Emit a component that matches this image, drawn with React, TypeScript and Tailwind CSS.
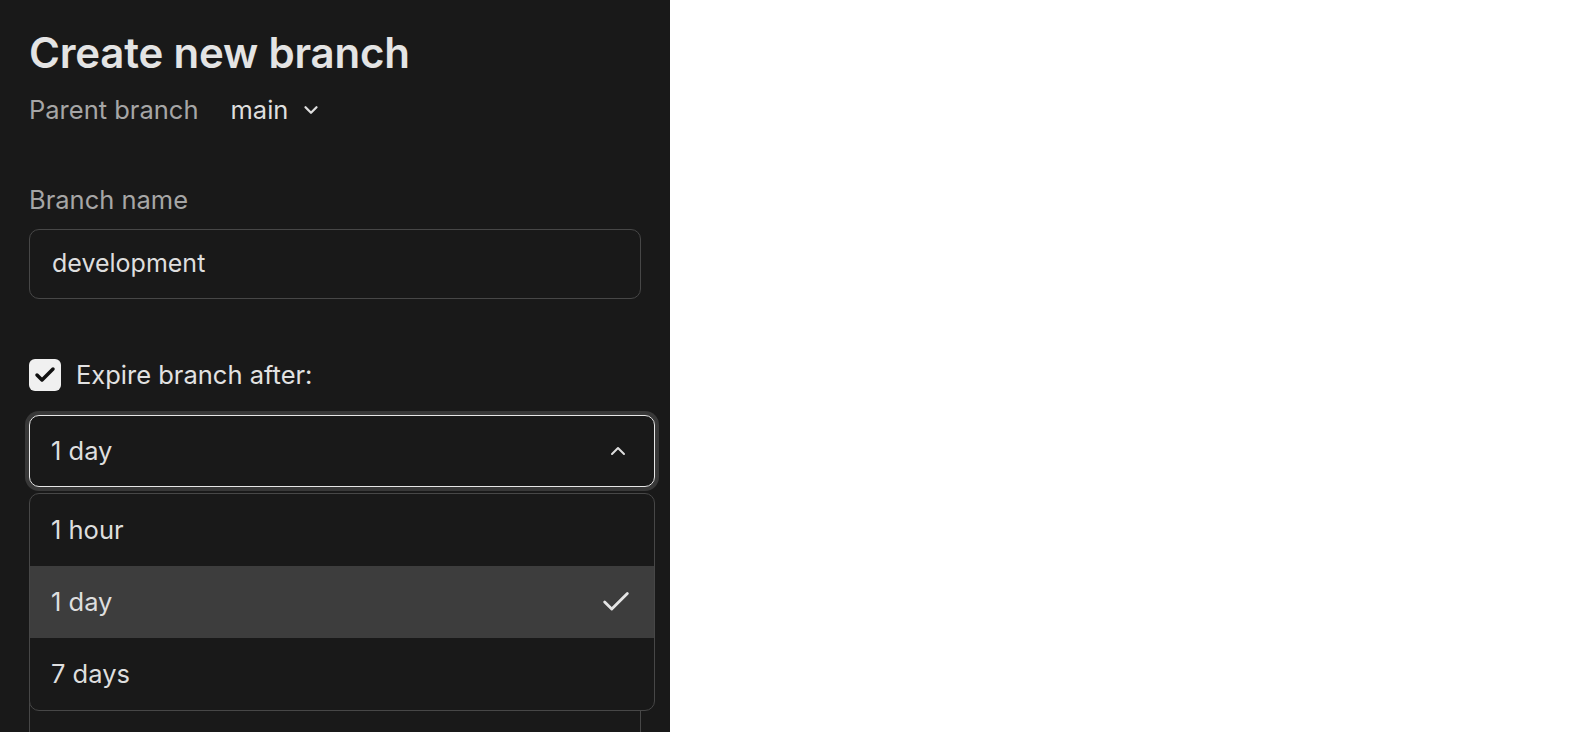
import { Check, ChevronDown, ChevronUp } from 'lucide-react';

const options = ['1 hour', '1 day', '7 days'];

const App: React.FC = () => {
  const selected = '1 day';
  return (
    <div className="flex h-[732px] w-full overflow-hidden font-['Inter',sans-serif]">
      <div className="w-[670px] shrink-0 h-full overflow-hidden bg-[#191919] pl-[29px] pr-[29px] pt-[28px]">
        <h1 className="text-[42px] leading-[50px] font-semibold text-[#e4e4e4] tracking-[-0.2px]">
          Create new branch
        </h1>
        <div className="mt-[16px] flex items-center text-[25.5px] leading-[32px]">
          <span className="text-[#a6a6a6]">Parent branch</span>
          <button className="ml-[32px] flex items-center text-[#dedede]">
            main
            <ChevronDown size={22} strokeWidth={2.5} className="ml-[12px]" />
          </button>
        </div>

        <label className="mt-[58px] block text-[25.5px] leading-[32px] text-[#a6a6a6]">
          Branch name
        </label>
        <div className="mt-[13px] flex h-[70px] items-center rounded-[10px] border border-[#474747] px-[22px] text-[25px] text-[#dedede]">
          development
        </div>

        <div className="mt-[60px] flex items-center gap-[15px]">
          <div className="flex h-[32px] w-[32px] items-center justify-center rounded-[6px] bg-[#f0f0f0]">
            <Check size={24} strokeWidth={3.5} className="text-[#111]" />
          </div>
          <span className="text-[25.5px] leading-[32px] text-[#e2e2e2]">Expire branch after:</span>
        </div>

        <div className="relative mt-[24px] w-[626px]">
          <div className="flex h-[72px] items-center justify-between rounded-[10px] border border-[#e6e6e6] pl-[21px] pr-[24px] text-[25.5px] text-[#dedede] shadow-[0_0_0_4px_#383838]">
            <span>1 day</span>
            <ChevronUp size={24} strokeWidth={2} className="text-[#dedede]" />
          </div>

          <div className="absolute left-0 top-[78px] z-10 w-[626px] overflow-hidden rounded-[10px] border border-[#474747] bg-[#191919]">
            {options.map((o) => (
              <div
                key={o}
                className={`flex h-[72px] items-center justify-between pl-[21px] pr-[21px] text-[25.5px] text-[#dedede] ${
                  o === selected ? 'bg-[#3d3d3d]' : ''
                }`}
              >
                <span>{o}</span>
                {o === selected && <Check size={34} strokeWidth={2} className="text-[#e4e4e4]" />}
              </div>
            ))}
          </div>
        </div>

        <div className="mt-[90px] h-[200px] w-[612px] rounded-[10px] border border-[#474747]" />
      </div>
      <div className="flex-1 bg-white" />
    </div>
  );
};

export default App;
